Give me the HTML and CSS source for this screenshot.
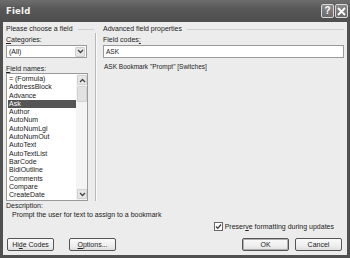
FILE: index.html
```html
<!DOCTYPE html>
<html>
<head>
<meta charset="utf-8">
<link rel="stylesheet" href="styles.css">
</head>
<body>
<div class="window">
  <div class="titlebar">
    <span class="title">Field</span>
    <div class="tbtns">
      <span class="tbtn help">?</span>
      <span class="tbtn close"><svg width="9" height="9" viewBox="0 0 9 9"><path d="M1 1 L8 8 M8 1 L1 8" stroke="#fff" stroke-width="1.8"/></svg></span>
    </div>
  </div>
  <div class="body">
    <div class="columns">
      <div class="left">
        <div class="group-head"><span>Please choose a field</span><i class="rule"></i></div>
        <div class="label"><u>C</u>ategories:</div>
        <div class="combo"><span class="combo-text">(All)</span><span class="combo-btn"><svg width="7" height="5" viewBox="0 0 7 5"><path d="M1 1 L3.5 3.5 L6 1" fill="none" stroke="#444" stroke-width="1.3"/></svg></span></div>
        <div class="label names"><u>F</u>ield names:</div>
        <div class="listbox">
          <ul class="items">
            <li>= (Formula)</li>
            <li>AddressBlock</li>
            <li>Advance</li>
            <li class="sel">Ask</li>
            <li>Author</li>
            <li>AutoNum</li>
            <li>AutoNumLgl</li>
            <li>AutoNumOut</li>
            <li>AutoText</li>
            <li>AutoTextList</li>
            <li>BarCode</li>
            <li>BidiOutline</li>
            <li>Comments</li>
            <li>Compare</li>
            <li>CreateDate</li>
          </ul>
          <div class="scrollbar">
            <span class="sb-btn"><svg width="7" height="5" viewBox="0 0 7 5"><path d="M1 4 L3.5 1.5 L6 4" fill="none" stroke="#444" stroke-width="1.3"/></svg></span>
            <span class="sb-thumb"></span>
            <span class="sb-track"></span>
            <span class="sb-btn"><svg width="7" height="5" viewBox="0 0 7 5"><path d="M1 1 L3.5 3.5 L6 1" fill="none" stroke="#444" stroke-width="1.3"/></svg></span>
          </div>
        </div>
      </div>
      <div class="vsep"></div>
      <div class="right">
        <div class="group-head"><span>Advanced field properties</span><i class="rule"></i></div>
        <div class="label">Field codes<u>:</u></div>
        <div class="textbox">ASK</div>
        <div class="syntax">ASK Bookmark "Prompt" [Switches]</div>
      </div>
    </div>
    <div class="desc-label">Description:</div>
    <div class="desc">Prompt the user for text to assign to a bookmark</div>
    <div class="check-row">
      <span class="checkbox"><svg width="7" height="7" viewBox="0 0 7 7"><path d="M1 3.5 L2.8 5.3 L6 1.5" fill="none" stroke="#333" stroke-width="1.2"/></svg></span>
      <span>Preser<u>v</u>e formatting during updates</span>
    </div>
    <div class="buttons">
      <div class="btn-group wide">
        <button class="btn">Hi<u>d</u>e Codes</button>
        <button class="btn"><u>O</u>ptions...</button>
      </div>
      <div class="btn-group">
        <button class="btn default">OK</button>
        <button class="btn">Cancel</button>
      </div>
    </div>
  </div>
</div>
</body>
</html>
```

FILE: styles.css
```css
* { box-sizing: border-box; }
html, body { margin: 0; padding: 0; }
body {
  width: 350px;
  height: 258px;
  overflow: hidden;
  font-family: "Liberation Sans", Arial, sans-serif;
  font-size: 7px;
  color: #222;
  background: #4a4a4a;
}
u { text-decoration: underline; text-underline-offset: 1px; }
.window {
  width: 350px;
  height: 258px;
  display: flex;
  flex-direction: column;
  background: #505050;
  padding: 0 3px 3px 3px;
}
.titlebar {
  height: 22px;
  margin: 0 -3px;
  display: flex;
  align-items: center;
  justify-content: space-between;
  padding: 0 2px 0 6px;
  background: linear-gradient(#6e6e6e, #585858 40%, #4e4e4e);
}
.title {
  color: #f4f4f4;
  font-weight: bold;
  font-size: 8.5px;
  font-family: "DejaVu Sans", sans-serif;
  letter-spacing: 0.2px;
}
.tbtns { display: flex; gap: 1px; }
.tbtn {
  width: 13px;
  height: 14px;
  border: 1px solid #d8d8d8;
  border-radius: 2px;
  background: linear-gradient(#8a8a8a, #6a6a6a);
  color: #fff;
  font-weight: bold;
  font-size: 10px;
  display: flex;
  align-items: center;
  justify-content: center;
  line-height: 1;
}
.body {
  flex: 1;
  background: #ececec;
  padding: 3px 3px 0 3px;
  display: flex;
  flex-direction: column;
}
.columns { display: flex; }
.left { width: 84px; }
.vsep {
  width: 2px;
  margin: 8px 5px 0 5px;
  border-left: 1px solid #b8b8b8;
  border-right: 1px solid #fafafa;
}
.right { flex: 1; padding-left: 1px; }
.group-head {
  display: flex;
  align-items: center;
  height: 8px;
  line-height: 8px;
  white-space: nowrap;
}
.left .group-head { margin-right: -4px; }
.rule {
  flex: 1;
  height: 1px;
  background: #cfcfcf;
  margin-left: 5px;
}
.label {
  margin-top: 2px;
  height: 9px;
  line-height: 9px;
}
.combo {
  margin-top: 1px;
  height: 13px;
  width: 81px;
  border: 1px solid #9a9a9a;
  background: #fff;
  display: flex;
  align-items: center;
  justify-content: space-between;
  padding: 0 1px 0 2px;
}
.combo-btn, .sb-btn {
  width: 10px;
  height: 10px;
  background: #e6e6e6;
  border: 1px solid #d0d0d0;
  border-radius: 1px;
  display: flex;
  align-items: center;
  justify-content: center;
}
.label.names { margin-top: 6px; }
.listbox {
  width: 82px;
  height: 128px;
  border: 1px solid #9a9a9a;
  background: #fff;
  display: flex;
}
.items {
  list-style: none;
  margin: 0;
  padding: 1px 0 0 1px;
  flex: 1;
  overflow: hidden;
}
.items li {
  height: 8.3px;
  line-height: 8.3px;
  padding-left: 1px;
  white-space: nowrap;
}
.items li.sel { background: #555; color: #fff; }
.scrollbar {
  width: 11px;
  display: flex;
  flex-direction: column;
  background: #f4f4f4;
  padding: 1px 0 1px 1px;
  gap: 1px;
}
.sb-thumb {
  height: 16px;
  width: 10px;
  background: #e2e2e2;
  border: 1px solid #d2d2d2;
  border-radius: 1px;
}
.sb-track { flex: 1; }
.textbox {
  margin-top: 1px;
  height: 13px;
  border: 1px solid #9a9a9a;
  background: #fff;
  padding-left: 2px;
  line-height: 11px;
  font-size: 6.5px;
}
.syntax {
  margin-top: 4px;
  padding-left: 1px;
  height: 9px;
  line-height: 9px;
  font-size: 6.5px;
}
.desc-label {
  margin-top: 1px;
  height: 8px;
  line-height: 8px;
}
.desc {
  padding-left: 6px;
  height: 10px;
  line-height: 10px;
}
.check-row {
  margin-top: 1px;
  display: flex;
  align-items: center;
  justify-content: flex-end;
  gap: 2px;
  padding-right: 10px;
  height: 10px;
}
.checkbox {
  width: 9px;
  height: 9px;
  border: 1px solid #666;
  background: #fff;
  display: flex;
  align-items: center;
  justify-content: center;
}
.buttons {
  margin-top: 7px;
  display: flex;
  justify-content: space-between;
  padding: 0 2px 0 1px;
}
.btn-group { display: flex; gap: 6px; }
.btn-group.wide { gap: 15px; }
.btn {
  font: inherit;
  color: #222;
  width: 47px;
  height: 13px;
  padding: 0;
  border: 1px solid #555;
  border-radius: 2px;
  background: linear-gradient(#fafafa, #ececec 70%, #dcdcdc);
  line-height: 11px;
}
.btn.default { box-shadow: inset 0 0 0 1px #b0b0b0; }
```
